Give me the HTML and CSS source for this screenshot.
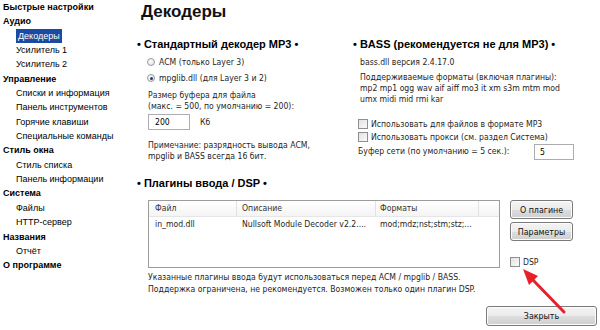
FILE: index.html
```html
<!DOCTYPE html>
<html lang="ru">
<head>
<meta charset="utf-8">
<title>Декодеры</title>
<link rel="stylesheet" href="styles.css">
</head>
<body>
<div class="app">
  <nav class="side">
    <div class="grp">Быстрые настройки</div>
    <div class="grp">Аудио</div>
    <div class="item"><span class="sel">Декодеры</span></div>
    <div class="item">Усилитель 1</div>
    <div class="item">Усилитель 2</div>
    <div class="grp">Управление</div>
    <div class="item">Списки и информация</div>
    <div class="item">Панель инструментов</div>
    <div class="item">Горячие клавиши</div>
    <div class="item">Специальные команды</div>
    <div class="grp">Стиль окна</div>
    <div class="item">Стиль списка</div>
    <div class="item">Панель информации</div>
    <div class="grp">Система</div>
    <div class="item">Файлы</div>
    <div class="item">HTTP-сервер</div>
    <div class="grp">Названия</div>
    <div class="item">Отчёт</div>
    <div class="grp">О программе</div>
  </nav>

  <main class="main">
    <h1 class="title">Декодеры</h1>
    <div class="cols">
      <section class="col-left">
        <h2 class="sec">• Стандартный декодер MP3 •</h2>
        <div class="body">
          <label class="radio-row first"><span class="radio"></span>ACM (только Layer 3)</label>
          <label class="radio-row"><span class="radio on"></span>mpglib.dll (для Layer 3 и 2)</label>
          <p class="txt buf-label">Размер буфера для файла<br>(макс. = 500, по умолчанию = 200):</p>
          <div class="buf-row"><span class="input w42">200</span><span class="unit">Кб</span></div>
          <p class="txt note">Примечание: разрядность вывода ACM,<br>mpglib и BASS всегда 16 бит.</p>
        </div>
      </section>
      <section class="col-right">
        <h2 class="sec">• BASS (рекомендуется не для MP3) •</h2>
        <div class="body r">
          <p class="txt ver">bass.dll версия 2.4.17.0</p>
          <p class="txt fmts">Поддерживаемые форматы (включая плагины):<br>mp2 mp1 ogg wav aif aiff mo3 it xm s3m mtm mod<br>umx midi mid rmi kar</p>
          <label class="cb-row first"><span class="cb"></span>Использовать для файлов в формате MP3</label>
          <label class="cb-row"><span class="cb"></span>Использовать прокси (см. раздел Система)</label>
          <div class="net-row"><span class="txt">Буфер сети (по умолчанию = 5 сек.):</span><span class="input w40">5</span></div>
        </div>
      </section>
    </div>

    <section class="plugins">
      <h2 class="sec">• Плагины ввода / DSP •</h2>
      <div class="plug-row">
        <div class="table">
          <div class="thead">
            <span class="c1">Файл</span><span class="c2">Описание</span><span class="c3">Форматы</span><span class="c4"></span>
          </div>
          <div class="trow">
            <span class="c1">in_mod.dll</span><span class="c2">Nullsoft Module Decoder v2.2....</span><span class="c3">mod;mdz;nst;stm;stz;...</span><span class="c4"></span>
          </div>
        </div>
        <div class="plug-side">
          <button class="btn">О плагине</button>
          <button class="btn">Параметры</button>
          <label class="cb-row dsp"><span class="cb"></span>DSP</label>
        </div>
      </div>
      <p class="txt plug-note">Указанные плагины ввода будут использоваться перед ACM / mpglib / BASS.<br>Поддержка ограничена, не рекомендуется. Возможен только один плагин DSP.</p>
    </section>

    <div class="footer"><button class="btn close">Закрыть</button></div>
  </main>

  <svg class="arrow" width="600" height="330" viewBox="0 0 600 330" aria-hidden="true">
    <line x1="564" y1="312" x2="532" y2="279" stroke="#e8202a" stroke-width="3" stroke-linecap="round"/>
    <polygon points="523,269 538,276 529,285" fill="#e8202a"/>
  </svg>
</div>
</body>
</html>
```

FILE: styles.css
```css
* { box-sizing: border-box; }
html, body { margin: 0; padding: 0; background: #fff; }
body { width: 600px; height: 330px; overflow: hidden; }

.app {
  position: relative;
  display: grid;
  grid-template-columns: 130px 1fr;
  width: 600px;
  height: 330px;
}

/* Sidebar */
.side {
  font-family: "Liberation Sans", Arial, sans-serif;
  font-size: 9px;
  color: #000;
}
.side .grp, .side .item {
  height: 14.35px;
  line-height: 14.35px;
  white-space: nowrap;
}
.side .grp { font-weight: bold; padding-left: 3px; }
.side .item { padding-left: 16px; }
.side .sel {
  display: inline-block;
  background: #1a4aa2;
  color: #fff;
  padding: 0 2px;
  line-height: 14px;
}

/* Main */
.main {
  padding: 2px 3px 0 7px;
  font-family: "DejaVu Sans Condensed", "DejaVu Sans", sans-serif;
  font-stretch: condensed;
  font-size: 8.6px;
  color: #1e1e1e;
  display: flex;
  flex-direction: column;
}
.title {
  margin: 0;
  padding-left: 4px;
  font-family: "Liberation Sans", Arial, sans-serif;
  font-size: 17px;
  font-weight: bold;
  line-height: 20px;
  color: #111;
}
.sec {
  margin: 0;
  font-family: "Liberation Sans", Arial, sans-serif;
  font-size: 11px;
  font-weight: bold;
  line-height: 14px;
  color: #000;
  white-space: nowrap;
}
.cols {
  display: grid;
  grid-template-columns: 216px 1fr;
  margin-top: 15px;
}
.txt { margin: 0; line-height: 11px; white-space: nowrap; }
.body { padding-left: 11px; }
.body.r { padding-left: 7px; }

.radio-row {
  display: flex;
  align-items: center;
  gap: 4px;
  height: 16px;
}
.radio-row.first { margin-top: 3px; }
.radio {
  width: 8px; height: 8px;
  border-radius: 50%;
  border: 1px solid #9a9a9a;
  background: radial-gradient(circle at 40% 40%, #fff, #dcdcdc);
  margin-left: -1px;
  position: relative;
  flex: none;
}
.radio.on::after {
  content: "";
  position: absolute;
  left: 1.5px; top: 1.5px;
  width: 3px; height: 3px;
  border-radius: 50%;
  background: #1f3d6a;
}
.buf-label { margin-top: 3.5px; }
.buf-row { display: flex; align-items: center; margin-top: 2.5px; }
.input {
  display: inline-flex;
  align-items: center;
  height: 16px;
  border: 1px solid #abadb3;
  background: #fff;
  padding-left: 6px;
  color: #000;
}
.w42 { width: 42px; }
.w40 { width: 40px; padding-left: 5px; }
.unit { margin-left: 10px; }
.note { margin-top: 9.5px; }

.ver { margin-top: 5.5px; }
.fmts { margin-top: 4px; }
.cb-row {
  display: flex;
  align-items: center;
  gap: 3px;
  height: 13px;
  white-space: nowrap;
}
.cb-row.first { margin-top: 13px; }
.body.r .cb-row { margin-left: -2px; }
.cb {
  width: 10px; height: 10px;
  border: 1px solid #8e8f8f;
  background: linear-gradient(135deg, #e2e2e2, #fafafa);
  flex: none;
}
.net-row {
  display: flex;
  align-items: center;
  justify-content: space-between;
  height: 16px;
  margin-left: -2px;
  width: 216px;
}

/* Plugins */
.plugins { margin-top: 14.5px; }
.plug-row {
  display: flex;
  margin-top: 10px;
  padding-left: 11px;
}
.table {
  width: 352px;
  height: 68px;
  border: 1px solid #9c9c9c;
  background: #fff;
}
.thead, .trow { display: flex; white-space: nowrap; }
.thead {
  height: 16px;
  line-height: 15px;
  background: linear-gradient(#fff, #f4f4f4);
  border-bottom: 1px solid #e6e6e6;
  color: #333;
}
.thead span { border-right: 1px solid #e2e2e2; }
.trow { height: 15px; line-height: 15px; }
.c1 { width: 88px; padding-left: 6px; }
.c2 { width: 139px; padding-left: 5px; }
.c3 { width: 103px; padding-left: 4px; }
.c4 { flex: 1; }
.thead .c4 { border-right: 0; }

.plug-side {
  display: flex;
  flex-direction: column;
  margin-left: 10px;
  height: 68px;
}
.btn {
  font-family: "DejaVu Sans Condensed", "DejaVu Sans", sans-serif;
  font-stretch: condensed;
  font-size: 8.8px;
  color: #111;
  width: 63px;
  height: 19px;
  padding: 0;
  border: 1px solid #7a7a7a;
  border-radius: 3px;
  background: linear-gradient(#f4f4f4 0%, #ebebeb 50%, #dddddd 51%, #cfcfcf 100%);
  box-shadow: inset 0 0 0 1px #fcfcfc;
}
.btn + .btn { margin-top: 3px; }
.dsp { margin-top: auto; margin-bottom: 1px; height: 11px; }

.plug-note { margin-top: 3px; line-height: 12px; padding-left: 11px; }

.footer {
  display: flex;
  justify-content: flex-end;
  margin-top: 11px;
}
.close { width: 111px; height: 20px; }

/* annotation overlay */
.arrow {
  position: absolute;
  left: 0; top: 0;
  pointer-events: none;
}
```
